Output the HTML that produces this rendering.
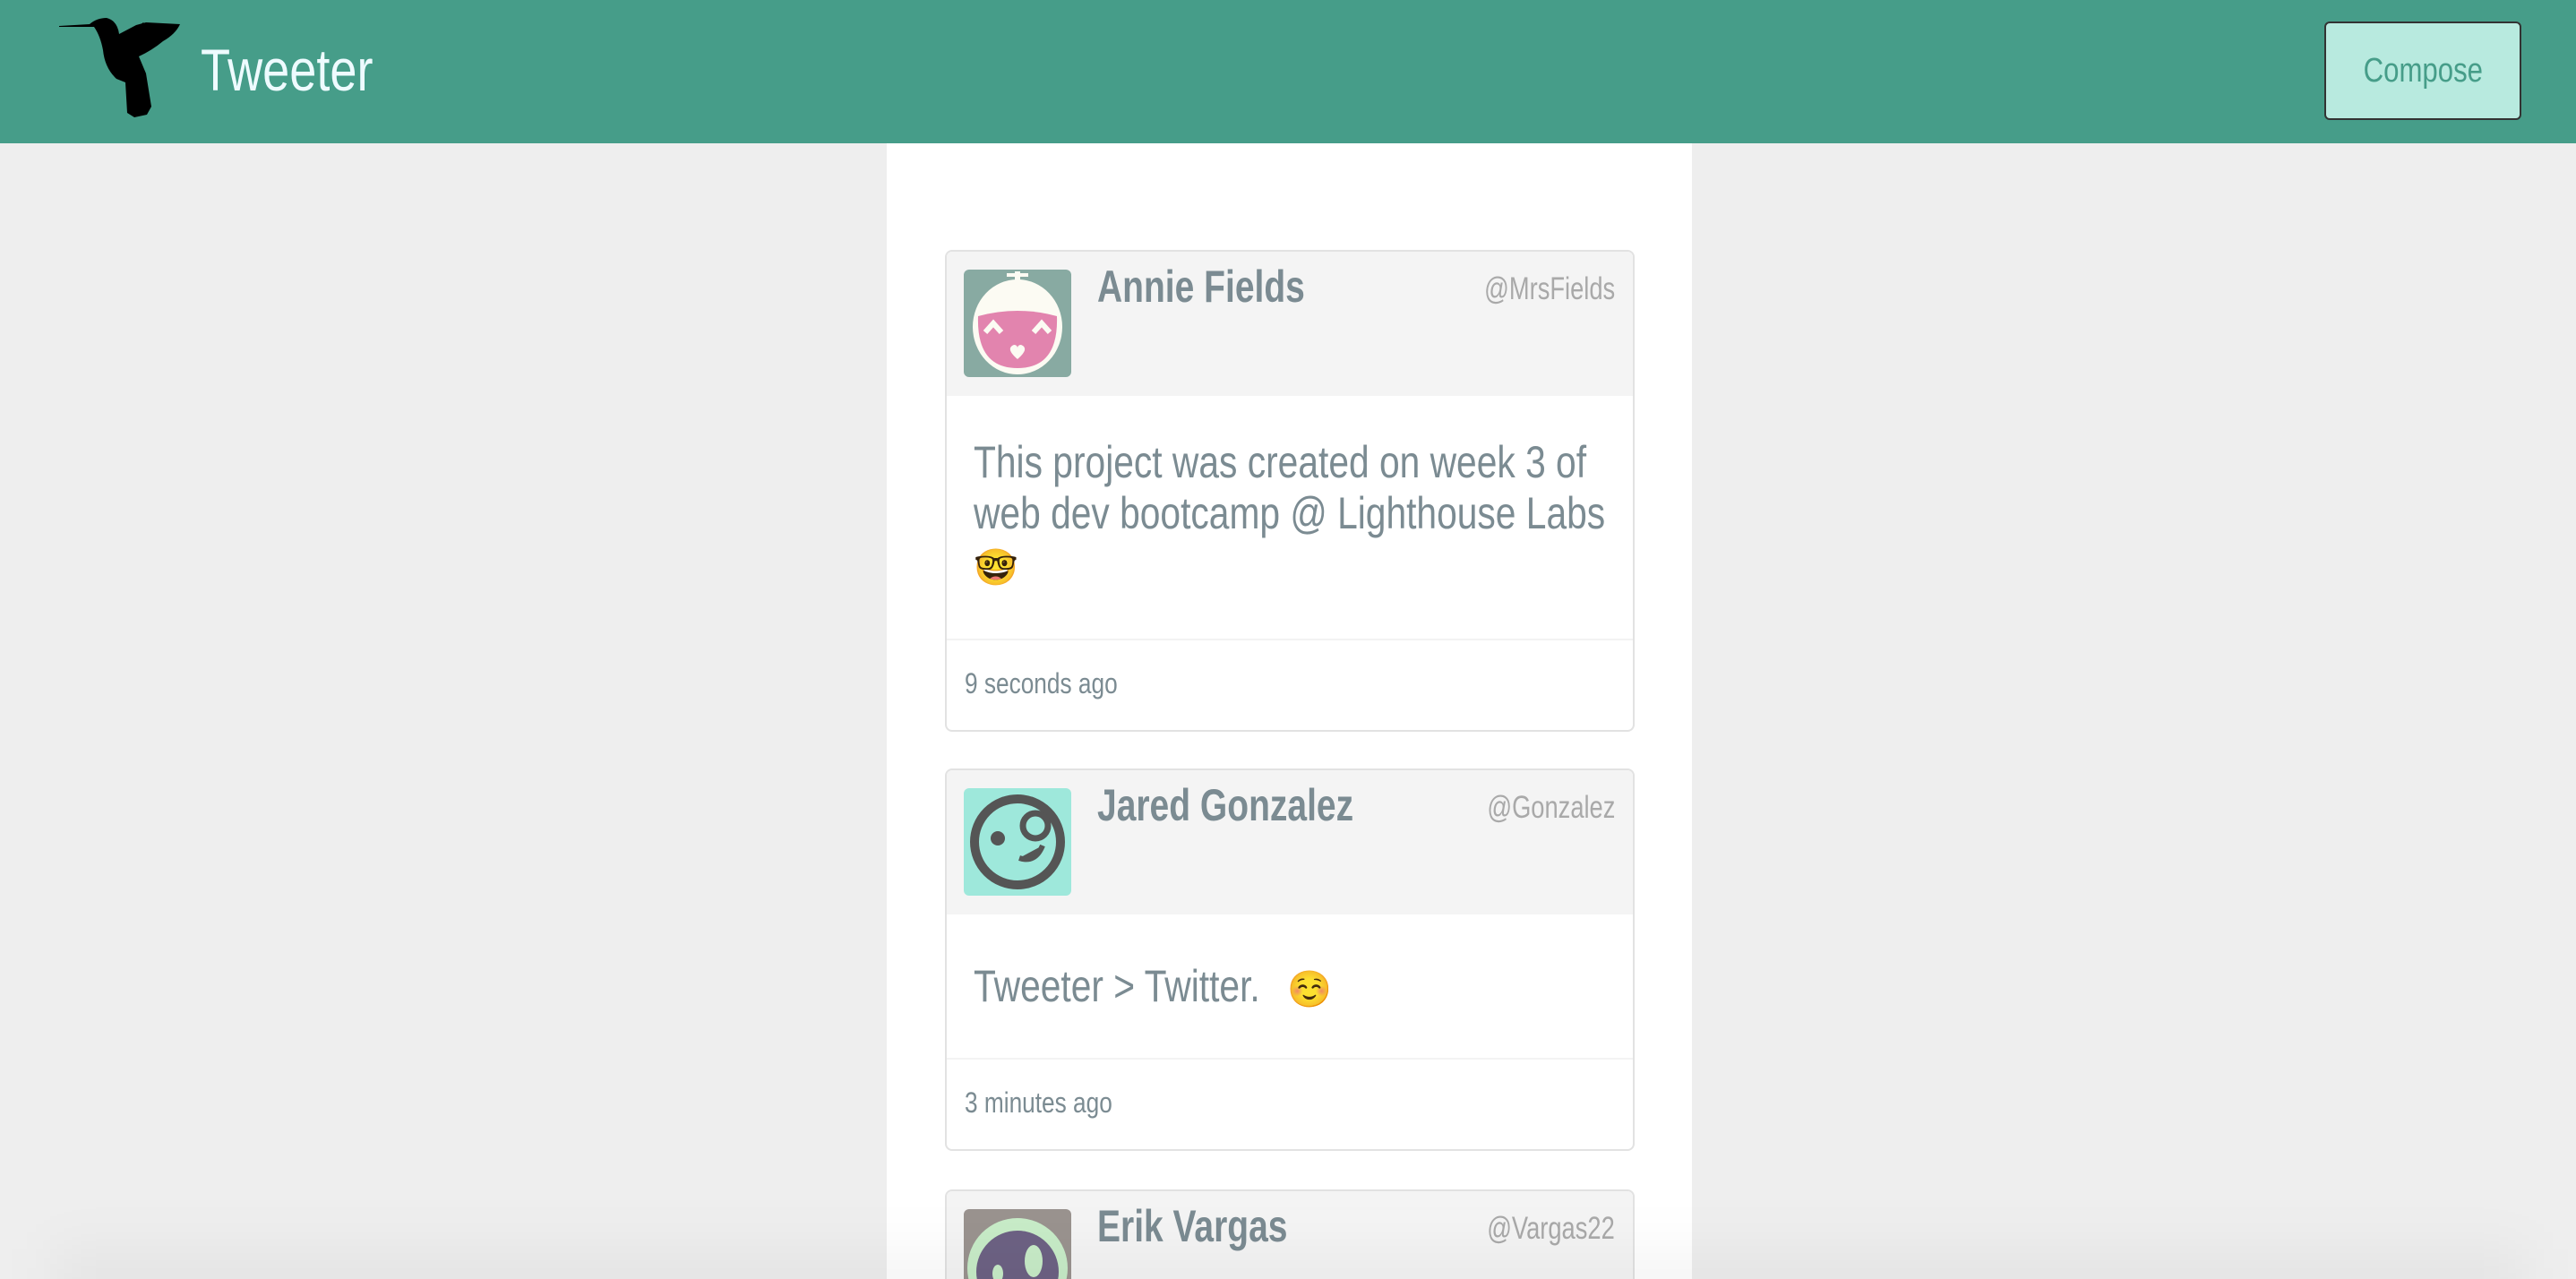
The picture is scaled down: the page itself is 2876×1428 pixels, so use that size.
<!DOCTYPE html>
<html><head><meta charset="utf-8"><style>
*{box-sizing:border-box;margin:0;padding:0}
html{width:2876px;height:1428px;overflow:hidden}
body{width:2876px;height:1428px;overflow:hidden;background:#eeeeee;font-family:"Liberation Sans",sans-serif;position:relative}
.hdr{position:absolute;left:0;top:0;width:2876px;height:160px;background:#469d89}
.title{position:absolute;left:224px;top:40px;font-size:66px;color:#eefbff;white-space:nowrap;transform:scaleX(0.82);transform-origin:left top}
.compose{position:absolute;left:2595px;top:24px;width:220px;height:110px;background:#b8eadf;border:2px solid #333;border-radius:6px;color:#469d89;font-size:38px;text-align:center;line-height:106px}
.compose span{display:inline-block;transform:scaleX(0.82)}
.col{position:absolute;left:990px;top:160px;width:899px;height:1268px;background:#fff}
.card{position:absolute;left:1055px;width:770px;border:2px solid #e2e2e2;border-radius:8px;background:#fff;overflow:hidden;color:#7b8b92}
.ch{background:#f4f4f4;position:relative}
.av{position:absolute;left:19px;top:20px;width:120px;height:120px;border-radius:6px;overflow:hidden}
.nm{position:absolute;left:168px;top:10px;font-size:50px;font-weight:bold;white-space:nowrap;transform:scaleX(0.78);transform-origin:left top}
.hd{position:absolute;right:20px;top:22px;font-size:35px;color:#a9a9a9;white-space:nowrap;transform:scaleX(0.78);transform-origin:right top}
.bd{padding:0 22px 0 30px;font-size:50px;line-height:57px;border-bottom:2px solid #f3f3f3;white-space:nowrap}
.bd .t{display:inline-block;transform:scaleX(0.815);transform-origin:left top}
.ft{font-size:32px;padding-left:20px;white-space:nowrap}
.ft span{display:inline-block;transform:scaleX(0.82);transform-origin:left top}
.shade{position:absolute;left:60px;top:1395px;width:2760px;height:80px;background:rgba(0,0,0,0.04);filter:blur(30px)}
</style></head><body>
<div class="hdr">
<svg width="220" height="160" style="position:absolute;left:0;top:0" viewBox="0 0 220 160">
<path d="M66,29 L100,27 Q108,20 119,20 Q131,23 133,38 L152,28 L163,25 L201,27 Q196,38 182,46 Q170,56 155,63 L163,82 L169,119 L164,128 L150,131 L142,126 L140,92 L130,88 Q117,76 115,56 Q112,40 105,30 L66,30 Z" fill="#000"/>
<path d="M140,40 L160,25 L164,30 L150,45 Z" fill="#000"/>
</svg>
<div class="title">Tweeter</div>
<div class="compose"><span>Compose</span></div>
</div>
<div class="col"></div>

<div class="card" style="top:279px;height:538px">
<div class="ch" style="height:161px">
<div class="av"><svg width="120" height="120"><rect width="120" height="120" fill="#88aaa2"/><ellipse cx="60" cy="64" rx="50" ry="53" fill="#fcfbf3"/><path d="M16,52 Q60,40 104,52 Q106,110 60,110 Q14,110 16,52Z" fill="#e284ae"/><rect x="57" y="2" width="6" height="10" fill="#fcfbf3"/><rect x="48" y="4" width="24" height="4" fill="#fcfbf3"/><path d="M24,70 l9,-10 l9,10 M78,70 l9,-10 l9,10" stroke="#fcfbf3" stroke-width="6" fill="none"/><path d="M60,100 q-14,-12 -4,-16 q4,0 4,4 q0,-4 4,-4 q10,4 -4,16z" fill="#fcfbf3"/></svg></div>
<div class="nm">Annie Fields</div><div class="hd">@MrsFields</div>
</div>
<div class="bd" style="padding-top:46px;height:273px"><span class="t">This project was created on week 3 of<br>web dev bootcamp @ Lighthouse Labs</span><br><span style="font-size:40px">🤓</span></div>
<div class="ft" style="padding-top:30px"><span>9 seconds ago</span></div>
</div>

<div class="card" style="top:858px;height:427px">
<div class="ch" style="height:161px">
<div class="av"><svg width="120" height="120"><rect width="120" height="120" fill="#9ee8db"/><circle cx="60" cy="60" r="48" fill="none" stroke="#555" stroke-width="10"/><circle cx="38" cy="56" r="8" fill="#555"/><circle cx="80" cy="42" r="14" fill="none" stroke="#555" stroke-width="7"/><path d="M62,78 q18,6 26,-14" fill="#555" stroke="#555" stroke-width="6"/></svg></div>
<div class="nm">Jared Gonzalez</div><div class="hd">@Gonzalez</div>
</div>
<div class="bd" style="padding-top:52px;height:162px"><span class="t">Tweeter &gt; Twitter.</span><span style="font-size:40px;margin-left:-42px">☺️</span></div>
<div class="ft" style="padding-top:30px"><span>3 minutes ago</span></div>
</div>

<div class="card" style="top:1328px;height:140px">
<div class="ch" style="height:140px">
<div class="av"><svg width="120" height="120"><rect width="120" height="120" fill="#9a938f"/><circle cx="60" cy="66" r="56" fill="#c8ecc8"/><circle cx="60" cy="70" r="46" fill="#6d6284"/><ellipse cx="78" cy="58" rx="10" ry="18" fill="#c8ecc8"/><ellipse cx="38" cy="72" rx="6" ry="10" fill="#c8ecc8"/></svg></div>
<div class="nm">Erik Vargas</div><div class="hd">@Vargas22</div>
</div>
</div>
<div class="shade"></div>
</body></html>
